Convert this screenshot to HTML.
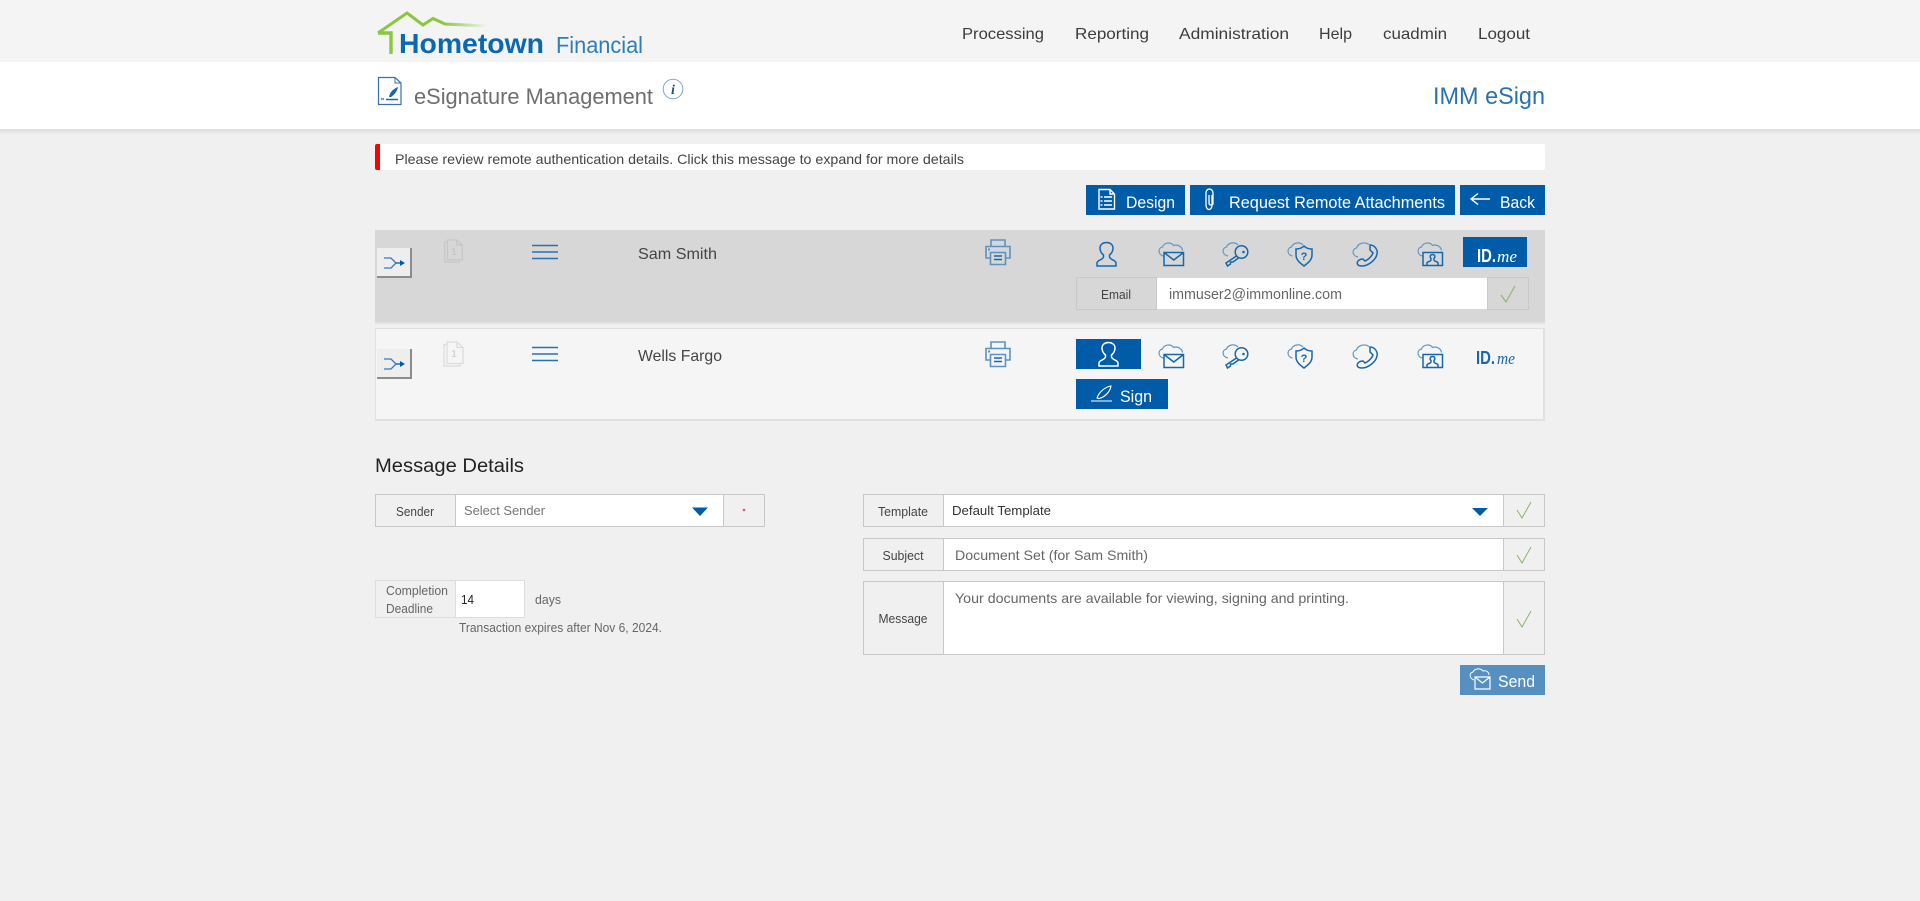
<!DOCTYPE html>
<html lang="en"><head><meta charset="utf-8"><title>eSignature Management</title>
<style>
html,body{margin:0;padding:0;width:1920px;height:901px;overflow:hidden;background:#f0f0f0}
.b{position:absolute;box-sizing:border-box}
svg{position:absolute;left:0;top:0}
text{font-family:"Liberation Sans",sans-serif}
.ic{fill:none;stroke:#1668ad;stroke-width:1.5}
.cl{fill:none;stroke:#5f97c7;stroke-width:1.2}
.lab{font-size:13px;fill:#444;text-anchor:middle}
.btn{font-size:17px;fill:#fff}
.nav{font-size:16px;fill:#3c3c3c}
</style></head><body>
<div class="b" style="left:0;top:0;width:1920px;height:62px;background:#f4f4f4"></div>
<div class="b" style="left:0;top:62px;width:1920px;height:67px;background:#fff"></div>
<div class="b" style="left:0;top:129px;width:1920px;height:6px;background:linear-gradient(#dcdcdc,#f0f0f0)"></div>
<div class="b" style="left:375px;top:144px;width:1170px;height:26px;background:#fff;border-left:5px solid #f00;border-radius:2px"></div>
<div class="b" style="left:1086px;top:185px;width:99px;height:30px;background:#005ca8"></div>
<div class="b" style="left:1190px;top:185px;width:265px;height:30px;background:#005ca8"></div>
<div class="b" style="left:1460px;top:185px;width:85px;height:30px;background:#005ca8"></div>
<div class="b" style="left:375px;top:230px;width:1170px;height:94px;background:#d7d7d7;border-bottom:2px solid #e2e2e2"></div>
<div class="b" style="left:375px;top:328px;width:1170px;height:93px;background:#f5f5f5;border:1px solid #e0e0e0;border-width:1px 2px 2px 1px"></div>
<div class="b" style="left:377px;top:248px;width:35px;height:30px;background:#eeeeee;border-right:2px solid #8c8c8c;border-bottom:2px solid #8c8c8c"></div>
<div class="b" style="left:377px;top:349px;width:35px;height:30px;background:#eeeeee;border-right:2px solid #8c8c8c;border-bottom:2px solid #8c8c8c"></div>
<div class="b" style="left:1463px;top:237px;width:64px;height:30px;background:#005ca8"></div>
<div class="b" style="left:1076px;top:339px;width:65px;height:30px;background:#005ca8"></div>
<div class="b" style="left:1076px;top:379px;width:92px;height:30px;background:#005ca8"></div>
<div class="b" style="left:1076px;top:277px;width:81px;height:33px;background:#d7d7d7;border:1px solid #c9c9c9"></div>
<div class="b" style="left:1157px;top:278px;width:330px;height:31px;background:#fff"></div>
<div class="b" style="left:1487px;top:277px;width:42px;height:33px;background:#d7d7d7;border:1px solid #c9c9c9"></div>
<div class="b" style="left:375px;top:494px;width:81px;height:33px;background:#f0f0f0;border:1px solid #c8c8c8"></div>
<div class="b" style="left:455px;top:494px;width:269px;height:33px;background:#fff;border:1px solid #c8c8c8"></div>
<div class="b" style="left:723px;top:494px;width:42px;height:33px;background:#f0f0f0;border:1px solid #c8c8c8"></div>
<div class="b" style="left:375px;top:580px;width:81px;height:38px;border:1px solid #ddd"></div>
<div class="b" style="left:455px;top:580px;width:70px;height:38px;background:#fff;border:1px solid #ddd"></div>
<div class="b" style="left:863px;top:494px;width:682px;height:33px;border:1px solid #c8c8c8"></div>
<div class="b" style="left:943px;top:495px;width:561px;height:31px;background:#fff;border:1px solid #c8c8c8;border-width:0 1px"></div>
<div class="b" style="left:863px;top:538px;width:682px;height:33px;border:1px solid #c8c8c8"></div>
<div class="b" style="left:943px;top:539px;width:561px;height:31px;background:#fff;border:1px solid #c8c8c8;border-width:0 1px"></div>
<div class="b" style="left:863px;top:581px;width:682px;height:74px;border:1px solid #c8c8c8"></div>
<div class="b" style="left:943px;top:582px;width:561px;height:72px;background:#fff;border:1px solid #c8c8c8;border-width:0 1px"></div>
<div class="b" style="left:1460px;top:665px;width:85px;height:30px;background:#5590c0"></div>

<svg width="1920" height="901" viewBox="0 0 1920 901">
<defs>
<linearGradient id="rf" gradientUnits="userSpaceOnUse" x1="378" x2="487" y1="0" y2="0"><stop offset="0" stop-color="#8cc63f"/><stop offset=".6" stop-color="#8cc63f"/><stop offset="1" stop-color="#8cc63f" stop-opacity="0"/></linearGradient>
<symbol id="person" viewBox="0 0 21 24" overflow="visible"><path d="M1 24H20V21C20 18 14 18 13.500 15V13C16 11 17 8.500 17 6C17 2.500 14 .5 10.500 .5C7 .5 4 2.500 4 6C4 8.500 5 11 7.500 13V15C7 18 1 18 1 21Z"/></symbol>
<symbol id="mail" viewBox="0 0 26 24" overflow="visible"><path class="cl" d="M5.500 14C0 13 -.500 6 4.500 5C6 .5 13 -.5 15.500 3.500C19.500 2 24 4.500 24.500 8.500"/><path class="ic" d="M6 10.500H25.500V23.500H6ZM6 10.500L15.750 18L25.500 10.500"/></symbol>
<symbol id="key" viewBox="0 0 26 24" overflow="visible"><path class="cl" d="M6 14C0 13 -.5 6 4.500 5C6 .5 13 -.5 16 3"/><circle class="ic" cx="19.500" cy="10" r="6.300"/><circle cx="21.500" cy="10" r="1.300" fill="#1668ad"/><path class="ic" d="M14.500 14L4 21L5.500 24L8.500 22V20H11L16.500 16"/></symbol>
<symbol id="shield" viewBox="0 0 26 24" overflow="visible"><path class="cl" d="M5.500 14C0 13 -.5 6 4.500 5C6 .5 13 -.5 16 3"/><path class="ic" d="M9 7C12 7 15 6 17 4C19 6 22 7 25 7V13C25 18 21 21 17 24C13 21 9 18 9 13Z"/><text x="17" y="18" font-size="11" font-weight="bold" fill="#1668ad" text-anchor="middle">?</text></symbol>
<symbol id="phone" viewBox="0 0 26 24" overflow="visible"><path class="cl" d="M6 15C0 14 -.5 7 4.500 6C6 1 13 -.5 17 2.500"/><path class="ic" d="M18 3C23 3 26 8 25 12C24 18 16 24 10 24C6 24 4 22 6 19C7 18 9 17 11 17L13 19C16 18 20 14 21 11L18 8Z"/></symbol>
<symbol id="video" viewBox="0 0 26 24" overflow="visible"><path class="cl" d="M5.500 14C0 13 -.5 6 4.500 5C6 .5 13 -.5 15.500 3.500C19.500 2 24 4.500 24.500 8.500"/><path class="ic" d="M6 10.500H25.500V23.500H6Z"/><path class="ic" stroke-width="1.100" d="M10 23V21C10 19.500 14 19.500 14 18V16.500C12.500 15 13 12.500 15.500 12.500C18 12.500 18.500 15 17 16.500V18C17 19.500 21 19.500 21 21V23"/></symbol>
<symbol id="printer" viewBox="0 0 26 26" overflow="visible"><g fill="none" stroke="#5c93c4" stroke-width="1.600"><path d="M6 7V1H20V7M5 19H1V7.500H25V19H21"/><path d="M5.500 13.500H20.500V25.500H5.500Z"/></g><path d="M9 17H17M9 20.500H17" stroke="#1668ad" stroke-width="1.600"/><rect x="3" y="9.500" width="2" height="2" fill="#5c93c4"/></symbol>
<symbol id="docs" viewBox="0 0 21 26" overflow="visible"><path d="M4 3.500H1V25H17V22" fill="none"/><path d="M4 22.500V1H14L20 6.500V22.500Z" fill="none"/><path d="M14 1V6.500H20" fill="none"/></symbol>
<symbol id="shuf" viewBox="0 0 22 12" overflow="visible"><path d="M0 1H7L12 6L7 11H0" fill="none" stroke="#3b78b5" stroke-width="1.300"/><path d="M12 6H19" stroke="#005ca8" stroke-width="1.300"/><path d="M16 3L21 6L16 9Z" fill="#005ca8"/></symbol>
</defs>

<!-- logo -->
<path d="M378 33L407 13L423 25L433 18.500L445 24L487 26" fill="none" stroke="url(#rf)" stroke-width="3"/>
<path d="M378 33H391V54" fill="none" stroke="#8cc63f" stroke-width="3.400"/>
<text x="399" y="53" font-size="28" font-weight="bold" fill="#0b69b0" textLength="145" lengthAdjust="spacingAndGlyphs">Hometown</text>
<text x="556" y="53" font-size="23" fill="#2e7dbb" textLength="87" lengthAdjust="spacingAndGlyphs">Financial</text>

<!-- nav -->
<text class="nav" x="962" y="39" textLength="82" lengthAdjust="spacingAndGlyphs">Processing</text>
<text class="nav" x="1075" y="39" textLength="74" lengthAdjust="spacingAndGlyphs">Reporting</text>
<text class="nav" x="1179" y="39" textLength="110" lengthAdjust="spacingAndGlyphs">Administration</text>
<text class="nav" x="1319" y="39" textLength="33" lengthAdjust="spacingAndGlyphs">Help</text>
<text class="nav" x="1383" y="39" textLength="64" lengthAdjust="spacingAndGlyphs">cuadmin</text>
<text class="nav" x="1478" y="39" textLength="52" lengthAdjust="spacingAndGlyphs">Logout</text>

<!-- title -->
<path d="M378.500 77.500H395L401 83V104.500H378.500Z" fill="#fff" stroke="#3a6fb0" stroke-width="1.200"/><path d="M395 77.500V83H401" fill="none" stroke="#3a6fb0"/>
<path d="M389 97C390 92 393 89 398 87C397 92 394 95 391 97Z" fill="#1668ad"/><path d="M386 99.500H398" stroke="#1668ad" stroke-width="1.500"/><path d="M381 98L384 100M384 98L381 100" stroke="#555" stroke-width=".7"/>
<text x="414" y="104" font-size="22" fill="#6e6e6e" textLength="239" lengthAdjust="spacingAndGlyphs">eSignature Management</text>
<circle cx="673" cy="89" r="9.800" fill="#fff" stroke="#7ba5cc"/><text x="673" y="94" font-size="14" font-weight="bold" font-style="italic" fill="#1d4f80" style="font-family:'Liberation Serif',serif" text-anchor="middle">i</text>
<text x="1433" y="104" font-size="24" fill="#2a72ae" textLength="112" lengthAdjust="spacingAndGlyphs">IMM eSign</text>

<!-- alert -->
<text x="395" y="164" font-size="14" fill="#444" textLength="569" lengthAdjust="spacingAndGlyphs">Please review remote authentication details. Click this message to expand for more details</text>

<!-- action buttons -->
<g fill="none" stroke="#fff" stroke-width="1.400"><path d="M1099 189.500H1110L1114.500 194V209H1099ZM1110 189.500V194H1114.500"/><path d="M1104 197H1112M1104 201H1112M1104 205H1112M1100.500 197H1102.500M1100.500 201H1102.500M1100.500 205H1102.500"/></g>
<text class="btn" x="1126" y="208" textLength="49" lengthAdjust="spacingAndGlyphs">Design</text>
<path d="M1212 195V205C1212 211 1206 211 1206 205V193C1206 187.500 1213 188 1213 193V204C1213 205 1209 206 1209 203V195" fill="none" stroke="#fff" stroke-width="1.300"/>
<text class="btn" x="1229" y="208" textLength="216" lengthAdjust="spacingAndGlyphs">Request Remote Attachments</text>
<path d="M1490 199H1471M1478 193.500L1471 199L1478 204.500" fill="none" stroke="#fff" stroke-width="1.400"/>
<text class="btn" x="1500" y="208" textLength="35" lengthAdjust="spacingAndGlyphs">Back</text>

<!-- row 1 -->
<use href="#shuf" x="384" y="257" width="22" height="12"/>
<use href="#docs" x="443" y="239" width="21" height="24" fill="none" stroke="#c6c6c6" stroke-width="1.300"/>
<text x="454" y="255" font-size="10" font-weight="bold" fill="#c6c6c6" text-anchor="middle">1</text>
<path d="M532 245.500H558M532 252H558M532 258.500H558" stroke="#2a72ae" stroke-width="1.500"/>
<text x="638" y="259" font-size="16" fill="#444" textLength="79" lengthAdjust="spacingAndGlyphs">Sam Smith</text>
<use href="#printer" x="985" y="239" width="26" height="26"/>
<use href="#person" x="1096" y="242" width="21" height="24" class="ic"/>
<use href="#mail" x="1158" y="242" width="26" height="24"/>
<use href="#key" x="1222" y="242" width="26" height="24"/>
<use href="#shield" x="1287" y="242" width="26" height="24"/>
<use href="#phone" x="1352" y="242" width="26" height="24"/>
<use href="#video" x="1417" y="242" width="26" height="24"/>
<text x="1477" y="262" font-size="18" font-weight="bold" fill="#fff" textLength="19" lengthAdjust="spacingAndGlyphs">ID.</text>
<text x="1497" y="262" font-size="17" font-style="italic" fill="#fff" style="font-family:'Liberation Serif',serif" textLength="20" lengthAdjust="spacingAndGlyphs">me</text>
<text class="lab" x="1116" y="299" fill="#444" textLength="30" lengthAdjust="spacingAndGlyphs">Email</text>
<text x="1169" y="299" font-size="15" fill="#666" textLength="173" lengthAdjust="spacingAndGlyphs">immuser2@immonline.com</text>
<path d="M1501 295L1506 302L1515 286" fill="none" stroke="#8fb46a" stroke-width="1.100"/>

<!-- row 2 -->
<use href="#shuf" x="384" y="358" width="22" height="12"/>
<use href="#docs" x="443" y="341" width="21" height="26" fill="none" stroke="#dcdcdc" stroke-width="1.300"/>
<text x="454" y="357" font-size="10" font-weight="bold" fill="#d4d4d4" text-anchor="middle">1</text>
<path d="M532 347.500H558M532 354H558M532 360.500H558" stroke="#2a72ae" stroke-width="1.500"/>
<text x="638" y="361" font-size="16" fill="#444" textLength="84" lengthAdjust="spacingAndGlyphs">Wells Fargo</text>
<use href="#printer" x="985" y="341" width="26" height="26"/>
<use href="#person" x="1098" y="342" width="21" height="24" fill="none" stroke="#fff" stroke-width="1.500"/>
<use href="#mail" x="1158" y="344" width="26" height="24"/>
<use href="#key" x="1222" y="344" width="26" height="24"/>
<use href="#shield" x="1287" y="344" width="26" height="24"/>
<use href="#phone" x="1352" y="344" width="26" height="24"/>
<use href="#video" x="1417" y="344" width="26" height="24"/>
<text x="1476" y="364" font-size="18" font-weight="bold" fill="#1668ad" textLength="19" lengthAdjust="spacingAndGlyphs">ID.</text>
<text x="1497" y="364" font-size="17" font-style="italic" fill="#1668ad" style="font-family:'Liberation Serif',serif" textLength="18" lengthAdjust="spacingAndGlyphs">me</text>
<path d="M1091 401H1112M1097 398C1099 392 1105 387 1111 386C1110 392 1105 397 1099 398.500Z" fill="none" stroke="#fff" stroke-width="1.100"/>
<text class="btn" x="1120" y="402" textLength="32" lengthAdjust="spacingAndGlyphs">Sign</text>

<!-- message details -->
<text x="375" y="472" font-size="19" fill="#222" textLength="149" lengthAdjust="spacingAndGlyphs">Message Details</text>
<text class="lab" x="415" y="516" textLength="38" lengthAdjust="spacingAndGlyphs">Sender</text>
<text x="464" y="515" font-size="13" fill="#777" textLength="81" lengthAdjust="spacingAndGlyphs">Select Sender</text>
<path d="M692 507.500H708L700 516Z" fill="#005ca8"/>
<circle cx="744" cy="510" r="1.300" fill="#e2566f"/>
<text x="386" y="595" font-size="13" fill="#666" textLength="62" lengthAdjust="spacingAndGlyphs">Completion</text>
<text x="386" y="613" font-size="13" fill="#666" textLength="47" lengthAdjust="spacingAndGlyphs">Deadline</text>
<text x="461" y="604" font-size="13" fill="#222" textLength="13" lengthAdjust="spacingAndGlyphs">14</text>
<text x="535" y="604" font-size="12.500" fill="#666" textLength="26" lengthAdjust="spacingAndGlyphs">days</text>
<text x="459" y="632" font-size="12.500" fill="#666" textLength="203" lengthAdjust="spacingAndGlyphs">Transaction expires after Nov 6, 2024.</text>

<text class="lab" x="903" y="516" textLength="50" lengthAdjust="spacingAndGlyphs">Template</text>
<text x="952" y="515" font-size="13" fill="#333" textLength="99" lengthAdjust="spacingAndGlyphs">Default Template</text>
<path d="M1472 508H1488L1480 516Z" fill="#005ca8"/>
<path d="M1517 510L1522 518L1531 502" fill="none" stroke="#8fb46a" stroke-width="1"/>
<text class="lab" x="903" y="560" textLength="41" lengthAdjust="spacingAndGlyphs">Subject</text>
<text x="955" y="560" font-size="14" fill="#666" textLength="193" lengthAdjust="spacingAndGlyphs">Document Set (for Sam Smith)</text>
<path d="M1517 555L1522 563L1531 547" fill="none" stroke="#8fb46a" stroke-width="1"/>
<text class="lab" x="903" y="623" textLength="49" lengthAdjust="spacingAndGlyphs">Message</text>
<text x="955" y="603" font-size="14" fill="#666" textLength="394" lengthAdjust="spacingAndGlyphs">Your documents are available for viewing, signing and printing.</text>
<path d="M1517 619L1522 627L1531 611" fill="none" stroke="#8fb46a" stroke-width="1"/>

<path d="M1474 680C1469 678 1469 673 1473 672C1475 668 1481 668 1483 671C1486 670 1489 672 1489 675" fill="none" stroke="#fff" stroke-width="1"/>
<path d="M1475 677H1490V689H1475ZM1475 677L1482.500 683L1490 677" fill="#5590c0" stroke="#fff" stroke-width="1.200"/>
<text class="btn" x="1498" y="687" textLength="37" lengthAdjust="spacingAndGlyphs">Send</text>
</svg>
</body></html>
